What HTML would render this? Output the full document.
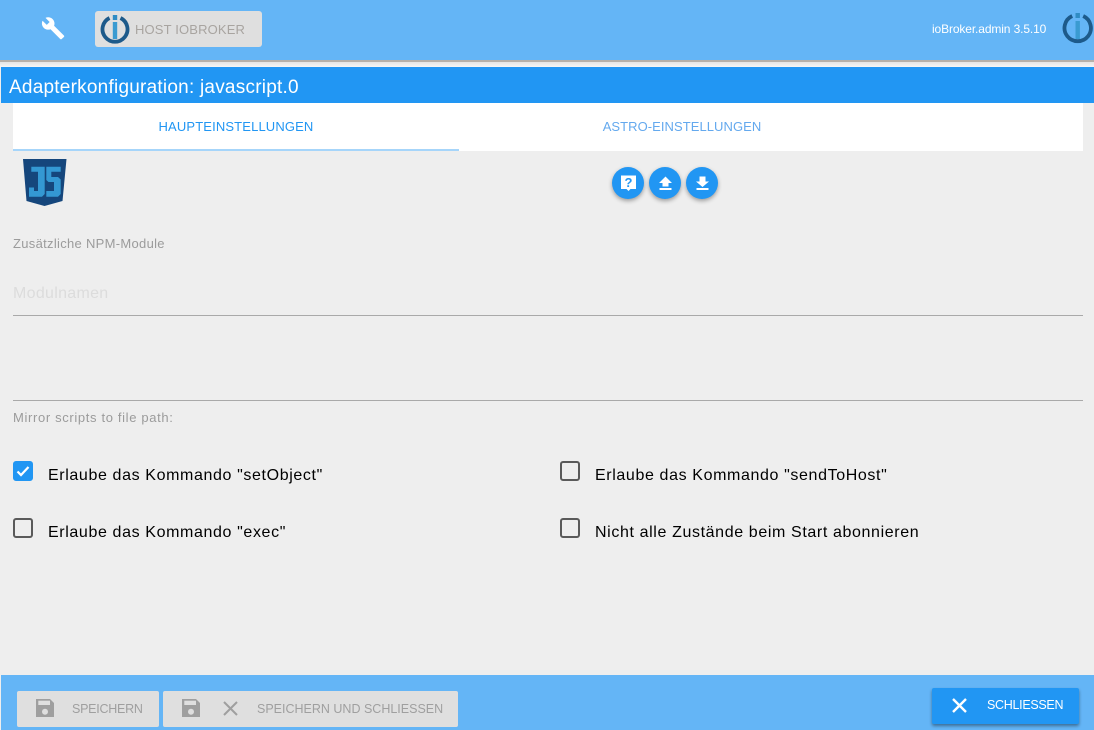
<!DOCTYPE html>
<html><head><meta charset="utf-8"><style>
*{box-sizing:border-box}
html,body{margin:0;padding:0;width:1094px;height:730px;overflow:hidden;background:#eee;font-family:"Liberation Sans",sans-serif}
.a{position:absolute;white-space:nowrap}
.cb{position:absolute;width:20px;height:20px;border:2px solid #5a5a5a;border-radius:3px}
.lbl{position:absolute;font-size:16px;color:#000;white-space:nowrap;letter-spacing:.62px;line-height:20px}
.fab{position:absolute;top:167px;width:32px;height:32px;border-radius:50%;background:#2196f3;box-shadow:0 2px 4px rgba(0,0,0,.35)}
.fab svg{display:block;margin-top:-1px}
.btn{position:absolute;top:691px;height:36px;background:#dfdfdf;border-radius:2px;color:#9f9f9f;font-size:12.500px;line-height:36px}
</style></head><body>
<div class="a" style="left:0;top:0;width:1094px;height:60px;background:#64b5f6"></div>
<div class="a" style="left:0;top:60px;width:1094px;height:2px;background:#b5b0aa"></div>
<div class="a" style="left:0;top:62px;width:1094px;height:5px;background:linear-gradient(#e4e4e4,#f6f6f6)"></div>
<svg class="a" style="left:41px;top:16px" width="25" height="25" viewBox="0 0 26 26"><path fill="#fff" d="M23.800 20.300 13.600 10.200c.9-2.400.4-5.100-1.500-7C10.100 1.200 7.100.800 4.700 1.900L9 6.200 6 9.200 1.600 4.900C.400 7.300.900 10.300 2.900 12.300c1.900 1.900 4.600 2.400 7 1.500l10.100 10.100c.4.500 1.100.500 1.500 0l2.300-2.100c.500-.5.500-1.100 0-1.500z"/></svg>
<div class="a" style="left:95px;top:11px;width:167px;height:36px;background:#dfdfdf;border-radius:3px"></div>
<svg class="a" style="left:100px;top:14px" width="30" height="31" viewBox="0 0 30 31"><path fill="none" stroke="#1d5a8a" stroke-width="3.800" d="M9.500 4a12.500 12.500 0 1 0 11 0"/><rect x="12.800" y="8" width="4.400" height="17" fill="#3a9bd1"/><rect x="12.800" y="1" width="4.400" height="5" fill="#2f8cc4"/></svg>
<div class="a" style="left:135px;top:21px;font-size:13px;line-height:18px;color:#a8a4a0;letter-spacing:.15px">HOST IOBROKER</div>
<div class="a" style="left:932px;top:20px;font-size:12px;line-height:18px;color:#fff;letter-spacing:-.12px">ioBroker.admin 3.5.10</div>
<svg class="a" style="left:1062px;top:13px" width="32" height="31" viewBox="0 0 32 31"><path fill="none" stroke="#1d5a8a" stroke-width="3.800" d="M10.200 3a13.200 13.200 0 1 0 11 0"/><rect x="13.500" y="8" width="4.400" height="18" fill="#3a9bd1"/><rect x="13.500" y="0" width="4.400" height="5" fill="#2f8cc4"/></svg>

<div class="a" style="left:1px;top:67px;width:1093px;height:36px;background:#2196f3"></div>
<div class="a" style="left:9px;top:76px;font-size:19px;line-height:24px;color:#fff;letter-spacing:.23px">Adapterkonfiguration: javascript.0</div>
<div class="a" style="left:13px;top:103px;width:1070px;height:48px;background:#fff"></div>
<div class="a" style="left:13px;top:149px;width:446px;height:2px;background:#a6d5fa"></div>
<div class="a" style="left:13px;top:118px;width:446px;text-align:center;font-size:13px;line-height:18px;color:#2196f3;letter-spacing:.14px">HAUPTEINSTELLUNGEN</div>
<div class="a" style="left:459px;top:118px;width:446px;text-align:center;font-size:13px;line-height:18px;color:#64a9ee;letter-spacing:.06px">ASTRO-EINSTELLUNGEN</div>

<svg class="a" style="left:23px;top:159px" width="44" height="49" viewBox="0 0 44 49"><path fill="#15467c" d="M0 0H43.500L39.500 42 21.500 47 3.500 42z"/><path fill="#3498d3" d="M8.300 7.700H21.700V35L19 37.700H6V28.500H11V32H15V12.700H8.300zM23.300 7.700H37.700V12.700H28.300V18H35L37.700 20.500V35L35 37.700H23.300V32H31V23H25.500L23.300 21z"/></svg>
<div class="fab" style="left:612px"><svg width="33" height="33" viewBox="0 0 33 33"><path fill="#fff" d="M9 9.500h15V23h-5.500l-2 2-2-2H9z"/><text x="16.500" y="21" font-size="13" font-weight="bold" text-anchor="middle" fill="#2196f3" font-family="Liberation Sans">?</text></svg></div>
<div class="fab" style="left:649px"><svg width="33" height="33" viewBox="0 0 33 33"><path fill="#fff" d="M16.500 10.500 23 17H19.500V20.500H13.500V17H10zM10.500 22h12v2h-12z"/></svg></div>
<div class="fab" style="left:686px"><svg width="33" height="33" viewBox="0 0 33 33"><path fill="#fff" d="M13.500 10.500h6V15.500H23L16.500 21 10 15.500h3.500zM10.500 22h12v2h-12z"/></svg></div>

<div class="a" style="left:13px;top:235px;font-size:13px;line-height:17px;color:#9b9b9b;letter-spacing:.3px">Zusätzliche NPM-Module</div>
<div class="a" style="left:13px;top:284px;font-size:16px;line-height:20px;color:#dcdcdc;letter-spacing:.3px">Modulnamen</div>
<div class="a" style="left:13px;top:315px;width:1070px;height:1px;background:#a9a9a9"></div>
<div class="a" style="left:13px;top:400px;width:1070px;height:1px;background:#a9a9a9"></div>
<div class="a" style="left:13px;top:410px;font-size:13px;line-height:16px;color:#9b9b9b;letter-spacing:.65px">Mirror scripts to file path:</div>

<div class="cb" style="left:13px;top:461px;background:#2196f3;border-color:#2196f3"><svg style="position:absolute;left:-2px;top:-2px" width="20" height="20" viewBox="0 0 20 20"><path fill="none" stroke="#fff" stroke-width="2.200" d="M4.500 10.500 8 14l7.500-8"/></svg></div>
<div class="lbl" style="left:48px;top:466px">Erlaube das Kommando "setObject"</div>
<div class="cb" style="left:13px;top:518px"></div>
<div class="lbl" style="left:48px;top:523px">Erlaube das Kommando "exec"</div>
<div class="cb" style="left:560px;top:461px"></div>
<div class="lbl" style="left:595px;top:466px">Erlaube das Kommando "sendToHost"</div>
<div class="cb" style="left:560px;top:518px"></div>
<div class="lbl" style="left:595px;top:523px">Nicht alle Zustände beim Start abonnieren</div>

<div class="a" style="left:1px;top:675px;width:1093px;height:55px;background:#64b5f6"></div>
<div class="btn" style="left:17px;width:142px"><svg style="position:absolute;left:18px;top:8px" width="20" height="20" viewBox="0 0 20 20"><path fill="#9f9f9f" d="M1 0H15L19 4V18H1z"/><rect x="3.300" y="1.700" width="11.700" height="4.300" fill="#dfdfdf"/><circle cx="10" cy="12.700" r="3" fill="#dfdfdf"/></svg><span class="a" style="left:55px;letter-spacing:-.25px">SPEICHERN</span></div>
<div class="btn" style="left:163px;width:295px"><svg style="position:absolute;left:18px;top:8px" width="20" height="20" viewBox="0 0 20 20"><path fill="#9f9f9f" d="M1 0H15L19 4V18H1z"/><rect x="3.300" y="1.700" width="11.700" height="4.300" fill="#dfdfdf"/><circle cx="10" cy="12.700" r="3" fill="#dfdfdf"/></svg><svg style="position:absolute;left:59px;top:9px" width="17" height="17" viewBox="0 0 17 17"><path stroke="#9f9f9f" stroke-width="2" d="M2 2l13 13M15 2 2 15"/></svg><span class="a" style="left:94px">SPEICHERN UND SCHLIESSEN</span></div>
<div class="a" style="left:932px;top:688px;width:147px;height:36px;background:#2196f3;border-radius:2px;box-shadow:0 2px 3px rgba(0,0,0,.4);color:#fff;font-size:12.500px;line-height:35px"><svg style="position:absolute;left:19px;top:9px" width="17" height="17" viewBox="0 0 17 17"><path stroke="#fff" stroke-width="2.400" d="M2 2l13 13M15 2 2 15"/></svg><span class="a" style="left:55px;letter-spacing:-.3px">SCHLIESSEN</span></div>
</body></html>
